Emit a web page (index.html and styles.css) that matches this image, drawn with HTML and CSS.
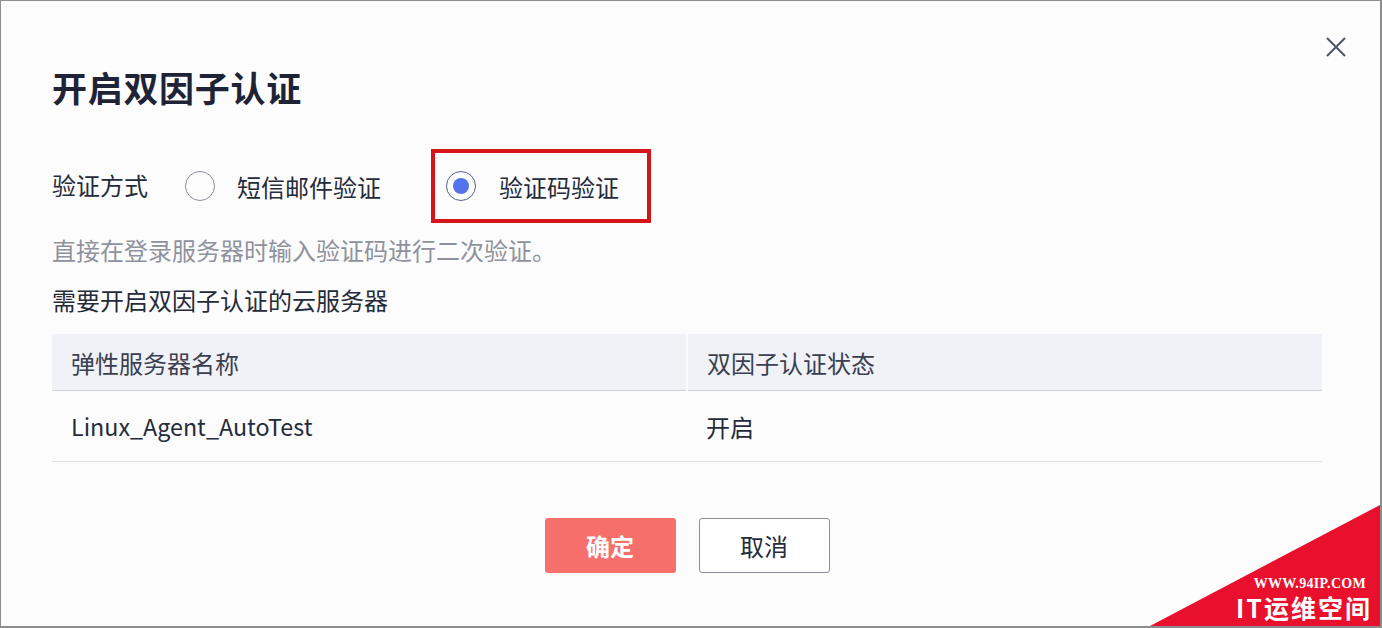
FILE: index.html
```html
<!DOCTYPE html>
<html lang="zh-CN">
<head>
    <meta charset="UTF-8">
    <meta name="viewport" content="width=device-width, initial-scale=1.0">
    <title>开启双因子认证</title>
    <link rel="stylesheet" href="styles.css">
</head>
<body>
    <div class="dialog">
        <button class="close" aria-label="关闭">
            <svg width="22" height="22" viewBox="0 0 22 22">
                <path d="M2 2 L20 20 M20 2 L2 20" stroke="#4f5566" stroke-width="2" fill="none"/>
            </svg>
        </button>

        <h1 class="title">开启双因子认证</h1>

        <div class="method">
            <span class="method-label">验证方式</span>
            <label class="option">
                <span class="radio"></span>
                <span>短信邮件验证</span>
            </label>
            <label class="option option-marked">
                <span class="radio checked"></span>
                <span>验证码验证</span>
            </label>
        </div>

        <p class="desc">直接在登录服务器时输入验证码进行二次验证。</p>
        <p class="subtitle">需要开启双因子认证的云服务器</p>

        <table class="servers">
            <thead>
                <tr>
                    <th>弹性服务器名称</th>
                    <th>双因子认证状态</th>
                </tr>
            </thead>
            <tbody>
                <tr>
                    <td class="name">Linux_Agent_AutoTest</td>
                    <td>开启</td>
                </tr>
            </tbody>
        </table>

        <div class="actions">
            <button class="btn btn-primary">确定</button>
            <button class="btn btn-default">取消</button>
        </div>

        <div class="watermark">
            <div class="wm-url">WWW.94IP.COM</div>
            <div class="wm-name">IT运维空间</div>
        </div>
    </div>
</body>
</html>
```

FILE: styles.css
```css
body {
    margin: 0;
    padding: 0;
    font-family: "Noto Sans CJK SC", "Noto Sans", sans-serif;
    color: #252b3a;
    background-color: #fcfcfd;
}
.dialog {
    position: relative;
    width: 1382px;
    height: 628px;
    box-sizing: border-box;
    padding: 0 58px 0 51px;
    border: 1px solid #8d8d8d;
    border-bottom-width: 2px;
    border-right-width: 2px;
    background-color: #fcfcfd;
    overflow: hidden;
}
.close {
    position: absolute;
    top: 35px;
    right: 33px;
    padding: 0;
    border: none;
    background: none;
    width: 22px;
    height: 22px;
}
.title {
    margin: 60px 0 0;
    font-size: 35px;
    line-height: 52px;
    font-weight: bold;
    color: #1f2336;
    letter-spacing: 0.7px;
}
.method {
    display: flex;
    align-items: center;
    margin-top: 36px;
    height: 74px;
    font-size: 24px;
}
.method-label {
    margin-top: -4px;
    margin-right: 37px;
}
.option {
    display: flex;
    align-items: center;
    gap: 22px;
    height: 74px;
    box-sizing: border-box;
}
.option-marked {
    margin-left: 50px;
    padding: 0 28px 0 11px;
    border: 4px solid #d8141b;
    gap: 23px;
}
.radio {
    width: 30px;
    height: 30px;
    box-sizing: border-box;
    border: 1.5px solid #8a8e99;
    border-radius: 50%;
    display: flex;
    align-items: center;
    justify-content: center;
}
.radio.checked {
    border-color: #58628c;
}
.radio.checked::after {
    content: "";
    width: 16px;
    height: 16px;
    border-radius: 50%;
    background-color: #5372eb;
}
.desc {
    margin: 10px 0 0;
    font-size: 24px;
    line-height: 34px;
    color: #8f929c;
}
.subtitle {
    margin: 16px 0 0;
    font-size: 24px;
    line-height: 34px;
}
.servers {
    margin-top: 17px;
    width: 100%;
    border-collapse: collapse;
    font-size: 24px;
}
.servers th {
    height: 56px;
    padding: 0 0 0 19px;
    text-align: left;
    font-weight: normal;
    color: #3b4050;
    background-color: #f0f2f8;
    border-bottom: 1px solid #cfd2db;
}
.servers th:first-child {
    width: 615px;
    border-right: 2px solid #fbfbfd;
}
.servers td {
    height: 70px;
    padding: 0 0 0 19px;
    border-bottom: 1px solid #dcdee3;
}
.servers td.name {
    font-size: 23.3px;
}
.actions {
    display: flex;
    justify-content: center;
    gap: 23px;
    margin-top: 56px;
}
.btn {
    width: 131px;
    height: 55px;
    border-radius: 3px;
    font-family: "Noto Sans CJK SC", sans-serif;
    font-size: 24px;
}
.btn-primary {
    border: none;
    background-color: #f66f6a;
    color: #fff;
    font-weight: bold;
}
.btn-default {
    border: 1px solid #8a8e99;
    background-color: #fff;
    color: #252b3a;
}
.watermark {
    position: absolute;
    right: 0;
    bottom: 0;
    width: 230px;
    height: 121px;
    background-color: #e8102d;
    clip-path: polygon(0 100%, 100% 0, 100% 100%);
    color: #fff;
    text-align: right;
    box-sizing: border-box;
    padding: 71px 8px 0 0;
}
.wm-url {
    font-family: "Liberation Serif", serif;
    font-weight: bold;
    font-size: 14px;
    line-height: 16px;
    letter-spacing: 0.3px;
    padding-right: 6px;
}
.wm-name {
    font-family: "Noto Sans CJK SC", sans-serif;
    font-weight: bold;
    font-size: 25px;
    line-height: 30px;
    letter-spacing: 2px;
}
```
